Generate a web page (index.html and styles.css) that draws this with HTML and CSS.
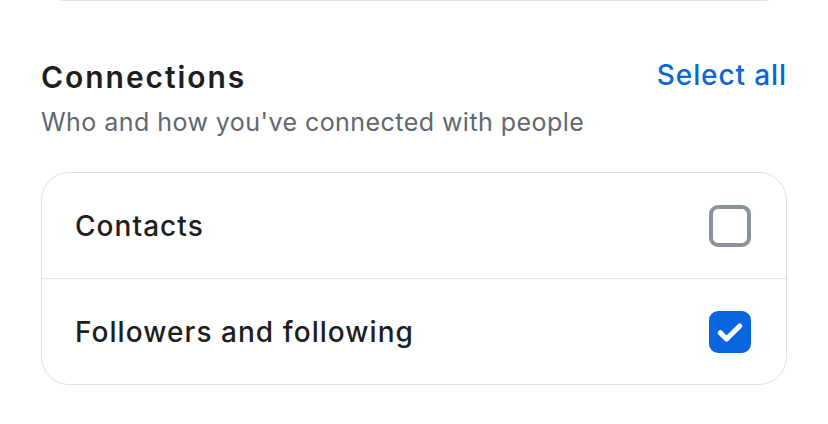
FILE: index.html
```html
<!DOCTYPE html>
<html lang="en">
<head>
    <meta charset="UTF-8">
    <meta name="viewport" content="width=device-width, initial-scale=1.0">
    <title>Connections</title>
    <link rel="stylesheet" href="styles.css">
</head>
<body>
    <div class="prev-card"></div>

    <section class="group">
        <div class="group-head">
            <div>
                <h2 class="group-title">Connections</h2>
                <p class="group-sub">Who and how you've connected with people</p>
            </div>
            <a href="#" class="select-all">Select all</a>
        </div>

        <div class="options">
            <label class="option">
                <span class="option-label">Contacts</span>
                <input type="checkbox" class="check">
            </label>
            <label class="option">
                <span class="option-label">Followers and following</span>
                <input type="checkbox" class="check" checked>
            </label>
        </div>
    </section>
</body>
</html>
```

FILE: styles.css
```css
body {
    margin: 0;
    background: #ffffff;
    font-family: Inter, "Noto Sans", sans-serif;
    color: #1c1e21;
    overflow: hidden;
}

.prev-card {
    height: 40px;
    margin: -40px 41px 0;
    border: 1px solid #dee0e3;
    border-top: none;
    border-radius: 0 0 24px 24px;
}

.group {
    padding: 0 41px;
}

.group-head {
    display: flex;
    justify-content: space-between;
    align-items: flex-start;
    padding-top: 57px;
}

.group-title {
    margin: 0;
    font-size: 30px;
    font-weight: 600;
    line-height: 38px;
    letter-spacing: 1.95px;
}

.group-sub {
    margin: 10px 0 0;
    font-size: 25px;
    line-height: 32px;
    letter-spacing: 0.45px;
    color: #606770;
}

.select-all {
    margin-top: -2px;
    font-size: 28px;
    font-weight: 500;
    line-height: 38px;
    letter-spacing: 0.9px;
    color: #0a66d8;
    text-decoration: none;
}

.options {
    margin-top: 34px;
    border: 1px solid #dee0e3;
    border-radius: 28px;
    overflow: hidden;
}

.option {
    display: flex;
    align-items: center;
    justify-content: space-between;
    height: 105px;
    padding: 0 35px 0 33px;
    cursor: pointer;
}

.option + .option {
    border-top: 1px solid #e3e5e8;
}

.option-label {
    font-size: 28px;
    font-weight: 500;
    letter-spacing: 1.05px;
}

.check {
    appearance: none;
    margin: 0;
    width: 42px;
    height: 42px;
    border: 4px solid #8a929b;
    border-radius: 9px;
    box-sizing: border-box;
    background: #fff;
}

.check:checked {
    border-color: #0a66e0;
    background: #0a66e0 url("data:image/svg+xml,%3Csvg xmlns='http://www.w3.org/2000/svg' viewBox='0 0 24 24'%3E%3Cpath d='M5.5 12.5l4.2 4.2L18.5 8' fill='none' stroke='white' stroke-width='3.4' stroke-linecap='round' stroke-linejoin='round'/%3E%3C/svg%3E") center / 36px no-repeat;
}
```
